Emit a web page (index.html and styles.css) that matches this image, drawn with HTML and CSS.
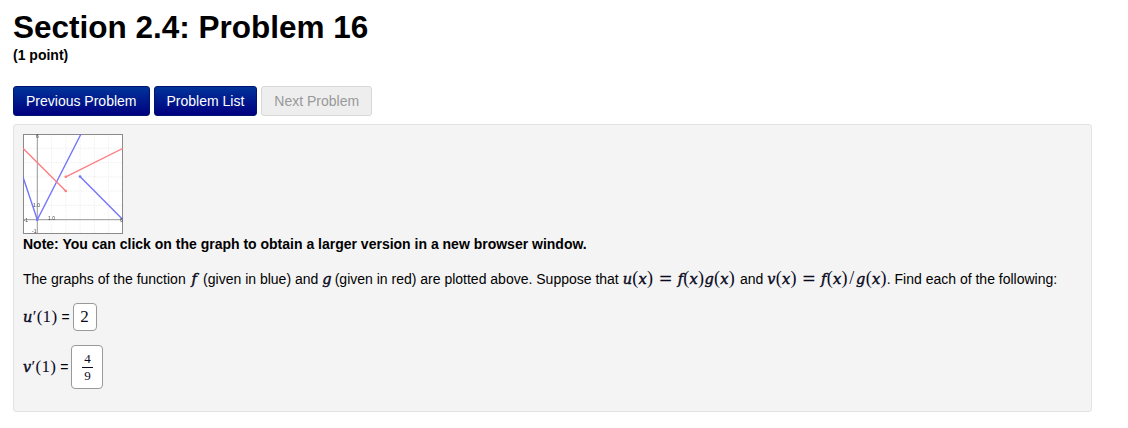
FILE: index.html
```html
<!DOCTYPE html>
<html lang="en">
<head>
<meta charset="utf-8">
<title>Section 2.4: Problem 16</title>
<link rel="stylesheet" href="styles.css">
</head>
<body>
<h1 class="title">Section 2.4: Problem 16</h1>
<div class="points">(1 point)</div>
<nav class="nav">
  <a class="btn primary">Previous Problem</a>
  <a class="btn primary">Problem List</a>
  <a class="btn disabled">Next Problem</a>
</nav>
<main class="panel">
  <svg class="graph" viewBox="0 0 100 100" width="100" height="100" aria-label="graph">
    <rect width="100" height="100" fill="#fff"/>
    <g class="grid">
      <path d="M28.6 0V100M42.9 0V100M57.1 0V100M71.4 0V100M85.7 0V100M0 14.3H100M0 28.6H100M0 42.9H100M0 57.1H100M0 71.4H100"/>
    </g>
    <path class="axis" d="M14.3 0V100M0 85.7H100"/>
    <rect class="frame" x="0.5" y="0.5" width="99" height="99"/>
    <path class="blue" d="M0 43L14.3 85.7L58 0M57 42.5L100 85.7"/>
    <path class="red" d="M0 14.3L42.8 57M42.8 42.8L100 14.3"/>
    <circle class="dot-b" cx="57" cy="42.5" r="1.3"/><circle class="dot-b" cx="14.3" cy="85.7" r="1.3"/>
    <circle class="dot-r" cx="42.8" cy="57" r="1.3"/><circle class="dot-r" cx="42.8" cy="42.8" r="1.3"/>
    <g class="ticks">
      <text x="10" y="72.5">1.0</text><text x="25" y="86">1.0</text><text x="0.5" y="88">-1</text><text x="97" y="88">6</text><text x="9" y="99">-1</text><text x="13" y="3.5">6</text>
    </g>
  </svg>
  <p class="note">Note: You can click on the graph to obtain a larger version in a new browser window.</p>
  <p class="text">The graphs of the function <i class="m f">f</i> (given in blue) and <i class="m g">g</i> (given in red) are plotted above. Suppose that <span class="eq eq-a"><i class="m">u</i><span class="r">(</span><i class="m">x</i><span class="r">)</span><span class="op">=</span><i class="m">f</i><span class="r">(</span><i class="m">x</i><span class="r">)</span><i class="m">g</i><span class="r">(</span><i class="m">x</i><span class="r">)</span></span> and <span class="eq"><i class="m">v</i><span class="r">(</span><i class="m">x</i><span class="r">)</span><span class="op">=</span><i class="m">f</i><span class="r">(</span><i class="m">x</i><span class="r">)</span><span class="r slash">/</span><i class="m">g</i><span class="r">(</span><i class="m">x</i><span class="r">)</span></span>. Find each of the following:</p>
  <div class="answer first"><span class="eq eq-u"><i class="m">u</i><span class="r">′(1)</span></span> <span class="eqs">=</span> <span class="box small"><span class="r">2</span></span></div>
  <div class="answer"><span class="eq eq-v"><i class="m">v</i><span class="r">′(1)</span></span> <span class="eqs">=</span> <span class="box"><span class="frac"><span class="num">4</span><span class="den">9</span></span></span></div>
</main>
</body>
</html>
```
FILE: styles.css
```css
* { box-sizing: border-box; }
html, body { margin: 0; background: #fff; }
body {
  padding: 0 13px;
  font-family: "Liberation Sans", Arial, sans-serif;
  font-size: 14px;
  color: #000;
  height: 428px;
  overflow: hidden;
}
.title { margin: 0; padding-top: 9px; font-size: 31.5px; line-height: 36px; font-weight: 700; }
.points { margin-top: 1px; font-size: 14px; line-height: 18px; font-weight: 700; }
.nav { display: flex; gap: 4px; margin-top: 22px; }
.btn {
  display: block; height: 30px; line-height: 28px; padding: 0 12px;
  border: 1px solid #ccc; border-radius: 3px; font-size: 14px;
}
.primary { color: #fff; background: linear-gradient(#003399, #000080); border-color: #00146e; }
.disabled { color: #999; background: #eee; border-color: #d8d8d8; }
.panel {
  width: 1079px; height: 288px; margin-top: 8px; padding: 9px 9px 0;
  background: #f4f4f4; border: 1px solid #e3e3e3; border-radius: 3px;
}
.graph { display: block; filter: blur(0.35px); }
.grid path { fill: none; stroke: #e6e6e6; stroke-width: 0.6; stroke-dasharray: 1.5 1; }
.axis { fill: none; stroke: #8a8a8a; stroke-width: 0.9; }
.frame { fill: none; stroke: #8a8a8a; stroke-width: 1; }
.blue { fill: none; stroke: #7474ff; stroke-width: 1.4; }
.red { fill: none; stroke: #ff7d80; stroke-width: 1.4; }
.dot-b { fill: #7474ff; }
.dot-r { fill: #ff7d80; }
.ticks text { font-family: "Liberation Sans", sans-serif; font-size: 5px; fill: #444; }
.note { margin: 0; font-size: 14px; line-height: 20px; font-weight: 700; }
.text { margin: 14px 0 0; font-size: 14px; line-height: 20px; white-space: nowrap; }
.m { font-family: "DejaVu Serif", serif; font-size: 14.5px; font-style: italic; color: #0a0a1e; letter-spacing: 0.3px; -webkit-text-stroke: 0.45px #0a0a1e; }
.r { font-family: "Liberation Serif", serif; font-size: 18px; color: #0a0a1e; letter-spacing: 0.3px; }
.op { margin: 0 5px; font-family: "DejaVu Sans", sans-serif; font-size: 17px; color: #0a0a1e; }
.eq { white-space: nowrap; }
.eq-a { margin-right: 1px; }
.slash { margin: 0 1.5px; }
.f { margin: 0 2px; }
.g { margin-right: -1px; }
.answer { display: flex; align-items: center; gap: 3px; margin-top: 14px; font-size: 14px; }
.answer .r { font-size: 17px; }
.eq-u, .eq-v { margin-right: 1px; }
.eqs { font-size: 14px; }
.box {
  display: inline-flex; align-items: center; justify-content: center;
  height: 44px; width: 32px; background: #fff; border: 1px solid #999; border-radius: 4px;
}
.box.small { height: 28px; width: 24px; }
.frac { display: flex; flex-direction: column; align-items: center; width: 11px; }
.num, .den { font-family: "Liberation Serif", serif; font-size: 13px; line-height: 14px; color: #0a0a1e; }
.num { border-bottom: 1px solid #0a0a1e; width: 100%; text-align: center; padding-bottom: 1px; }
.den { padding-top: 1px; }
```
